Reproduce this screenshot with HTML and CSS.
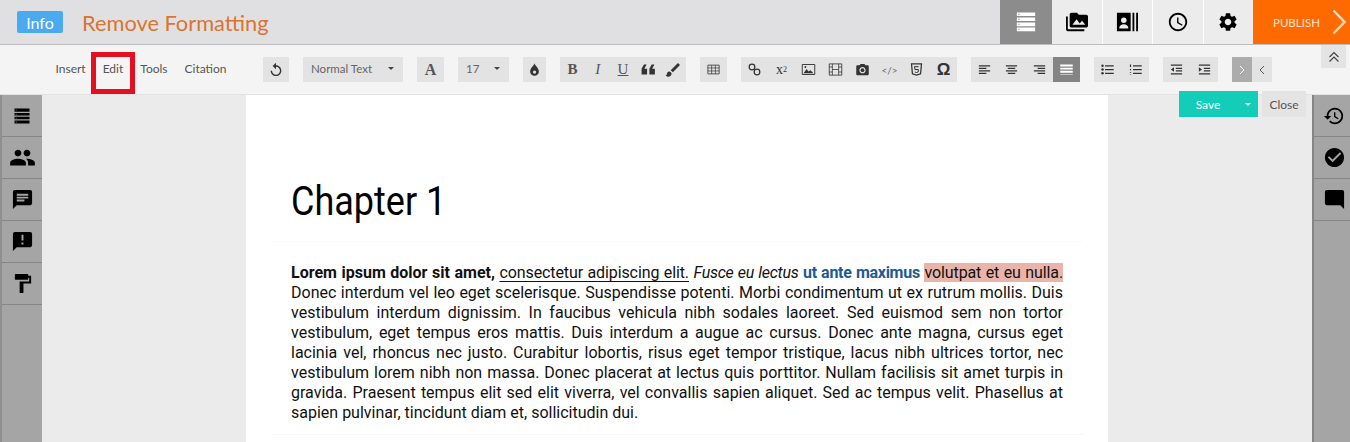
FILE: index.html
```html
<!DOCTYPE html>
<html lang="en">

<head>
    <meta charset="utf-8">
    <meta name="viewport" content="width=device-width, initial-scale=1.0">
    <title>Remove Formatting</title>
    <link rel="stylesheet" href="styles.css">
</head>

<body>
    <header class="topbar">
        <span class="badge">Info</span>
        <h1 class="title">Remove Formatting</h1>
        <nav class="mainnav">
            <a class="navtab active"><svg viewBox="0 0 24 24" class="navicon"><path d="M2 1.500h20v4H2zM2 7h20v4H2zM2 12.500h20v4H2zM2 18h20v4H2z" fill="#fff"/><path d="M3.500 3h1.500v1H3.500zM3.500 8.500h1.500v1H3.500zM3.500 14h1.500v1H3.500zM3.500 19.500h1.500v1H3.500z" fill="#8c8c8c"/></svg></a>
            <a class="navtab"><svg viewBox="0 0 24 24" class="navicon"><path d="M2 6H0v5h.01L0 20c0 1.100.9 2 2 2h18v-2H2V6zm20-2h-8l-2-2H6c-1.100 0-1.990.9-1.990 2L4 16c0 1.100.9 2 2 2h16c1.100 0 2-.9 2-2V6c0-1.100-.9-2-2-2zM7 15l4.500-6 3.500 4.510 2.500-3.010L21 15H7z"/></svg></a>
            <a class="navtab"><svg viewBox="0 0 24 24" class="navicon"><path d="M1 2h15v20H1zM18 2h2v20h-2zM22 2h2v20h-2z"/><circle cx="8.500" cy="10" r="3" fill="#ececec"/><path d="M3.500 19c0-3 2.500-4.500 5-4.500s5 1.500 5 4.500z" fill="#ececec"/></svg></a>
            <a class="navtab"><svg viewBox="0 0 24 24" class="navicon"><path d="M11.990 2C6.470 2 2 6.480 2 12s4.470 10 9.990 10C17.520 22 22 17.520 22 12S17.520 2 11.990 2zM12 20c-4.420 0-8-3.580-8-8s3.580-8 8-8 8 3.580 8 8-3.580 8-8 8zm.5-13H11v6l5.250 3.150.75-1.230-4.500-2.670z"/></svg></a>
            <a class="navtab"><svg viewBox="0 0 24 24" class="navicon"><path d="M19.140 12.940c.04-.3.06-.61.06-.94 0-.32-.02-.64-.07-.94l2.030-1.580c.18-.14.23-.41.12-.61l-1.920-3.320c-.12-.22-.37-.29-.59-.22l-2.390.96c-.5-.38-1.030-.7-1.620-.94l-.36-2.540c-.04-.24-.24-.41-.48-.41h-3.840c-.24 0-.43.17-.47.41l-.36 2.540c-.59.24-1.130.57-1.620.94l-2.390-.96c-.22-.08-.47 0-.59.22L2.740 8.870c-.12.21-.08.47.12.61l2.030 1.580c-.05.3-.09.63-.09.94s.02.64.07.94l-2.030 1.580c-.18.14-.23.41-.12.61l1.920 3.320c.12.22.37.29.59.22l2.390-.96c.5.38 1.030.7 1.620.94l.36 2.540c.05.24.24.41.48.41h3.840c.24 0 .44-.17.47-.41l.36-2.540c.59-.24 1.130-.56 1.620-.94l2.390.96c.22.08.47 0 .59-.22l1.920-3.320c.12-.22.07-.47-.12-.61l-2.010-1.580zM12 15.600c-1.980 0-3.600-1.620-3.600-3.600s1.620-3.600 3.600-3.600 3.600 1.620 3.600 3.600-1.620 3.600-3.600 3.600z"/></svg></a>
            <a class="publish">PUBLISH<svg viewBox="0 0 14 26" class="publish_arrow"><path d="M1.500 1.500 12.500 13 1.500 24.500" fill="none" stroke="#ffd9b8" stroke-width="2.400"/></svg></a>
        </nav>
    </header>

    <section class="toolbar">
        <div class="tabs">
            <a class="tab">Insert</a>
            <a class="tab marked">Edit</a>
            <a class="tab">Tools</a>
            <a class="tab">Citation</a>
        </div>
        <div class="groups">
            <div class="group w26"><button class="btn"><svg viewBox="0 0 24 24" class="ico i16"><path d="M12 5V1L7 6l5 5V7c3.310 0 6 2.690 6 6s-2.690 6-6 6-6-2.690-6-6H4c0 4.420 3.580 8 8 8s8-3.580 8-8-3.580-8-8-8z"/></svg></button></div>
            <div class="group w100"><button class="btn select"><span>Normal Text</span><i class="caret"></i></button></div>
            <div class="group w27"><button class="btn serif big bold">A</button></div>
            <div class="group w51"><button class="btn select"><span>17</span><i class="caret"></i></button></div>
            <div class="group w23"><button class="btn"><svg viewBox="0 0 24 24" class="ico"><path d="M12 2c1 4 7 8 7 13a7 7 0 0 1-14 0c0-5 6-9 7-13z"/><circle cx="12" cy="16" r="2.600" fill="#e3e3e3"/></svg></button></div>
            <div class="group w126">
                <button class="btn serif mid bold">B</button>
                <button class="btn serif mid em">I</button>
                <button class="btn serif mid un">U</button>
                <button class="btn"><svg viewBox="0 0 24 24" class="ico i22"><path d="M19 6h-3l-2.500 4.500V17h6v-6.500h-3zM10.500 6h-3L5 10.500V17h6v-6.500H8z"/></svg></button>
                <button class="btn"><svg viewBox="0 0 24 24" class="ico i18"><path d="M7 14c-1.660 0-3 1.340-3 3 0 1.310-1.160 2-2 2 .92 1.220 2.490 2 4 2 2.210 0 4-1.790 4-4 0-1.660-1.340-3-3-3zm13.710-9.370l-1.340-1.340c-.39-.39-1.020-.39-1.410 0L9 12.250 11.750 15l8.960-8.960c.39-.39.39-1.030 0-1.410z"/></svg></button>
            </div>
            <div class="group w27"><button class="btn"><svg viewBox="0 0 24 24" class="ico"><path d="M3 5h18v14H3z" fill="none" stroke="#333" stroke-width="1.300"/><path d="M3 9.500h18M3 14.300h18M9 5v14M15 5v14" stroke="#333" stroke-width="1.100"/></svg></button></div>
            <div class="group w216">
                <button class="btn"><svg viewBox="0 0 24 24" class="ico"><circle cx="8" cy="8" r="4.500" fill="none" stroke="#333" stroke-width="2"/><circle cx="16" cy="16" r="4.500" fill="none" stroke="#333" stroke-width="2"/></svg></button>
                <button class="btn sans">x<sup>2</sup></button>
                <button class="btn"><svg viewBox="0 0 24 24" class="ico"><path d="M2 4h20v16H2z" fill="none" stroke="#333" stroke-width="1.500"/><path d="M4 18l5-7 3 4 3-2 5 5z"/><circle cx="7" cy="8" r="1.500"/></svg></button>
                <button class="btn"><svg viewBox="0 0 24 24" class="ico"><path d="M2 3h20v18H2z" fill="none" stroke="#333" stroke-width="1.300"/><path d="M7 3v18M17 3v18M7 12h10M2 8h5M2 16h5M17 8h5M17 16h5" stroke="#333" stroke-width="1.200"/></svg></button>
                <button class="btn"><svg viewBox="0 0 24 24" class="ico"><path d="M9 3 7.200 5H4c-1.100 0-2 .9-2 2v12c0 1.100.9 2 2 2h16c1.100 0 2-.9 2-2V7c0-1.100-.9-2-2-2h-3.200L15 3H9zm3 15c-2.760 0-5-2.240-5-5s2.240-5 5-5 5 2.240 5 5-2.240 5-5 5z"/><circle cx="12" cy="13" r="3"/></svg></button>
                <button class="btn code">&lt;/&gt;</button>
                <button class="btn"><svg viewBox="0 0 24 24" class="ico"><path d="M4 3h16l-1.500 16L12 21l-6.500-2z" fill="none" stroke="#333" stroke-width="2"/><path d="M8.500 7.500h7M9 7.500l.4 4.500h5.600l-.4 4-2.600.8-2.600-.8" fill="none" stroke="#333" stroke-width="1.600"/></svg></button>
                <button class="btn omega">&#937;</button>
            </div>
            <div class="group w109">
                <button class="btn"><svg viewBox="0 0 24 24" class="ico"><path d="M3 5h18v2H3zM3 9h12v2H3zM3 13h18v2H3zM3 17h12v2H3z"/></svg></button>
                <button class="btn"><svg viewBox="0 0 24 24" class="ico"><path d="M3 5h18v2H3zM6 9h12v2H6zM3 13h18v2H3zM6 17h12v2H6z"/></svg></button>
                <button class="btn"><svg viewBox="0 0 24 24" class="ico"><path d="M3 5h18v2H3zM9 9h12v2H9zM3 13h18v2H3zM9 17h12v2H9z"/></svg></button>
                <button class="btn on"><svg viewBox="0 0 24 24" class="ico"><path d="M2 4h20v3H2zM2 9h20v3H2zM2 14h20v3H2zM2 19h20v1H2z" fill="#fff"/></svg></button>
            </div>
            <div class="group w55">
                <button class="btn"><svg viewBox="0 0 24 24" class="ico"><path d="M8 5h14v2H8zM8 11h14v2H8zM8 17h14v2H8z"/><circle cx="4" cy="6" r="2"/><circle cx="4" cy="12" r="2"/><circle cx="4" cy="18" r="2"/></svg></button>
                <button class="btn"><svg viewBox="0 0 24 24" class="ico"><path d="M8 5h14v2H8zM8 11h14v2H8zM8 17h14v2H8zM3 4h2v4H3zM3 11h2v2H3zM3 16h2v1H3zM3 19h2v1H3z"/></svg></button>
            </div>
            <div class="group w55">
                <button class="btn"><svg viewBox="0 0 24 24" class="ico"><path d="M3 4h18v2H3zM11 9h10v2H11zM11 13h10v2H11zM3 18h18v2H3zM8 8.500v7L3 12z"/></svg></button>
                <button class="btn"><svg viewBox="0 0 24 24" class="ico"><path d="M3 4h18v2H3zM11 9h10v2H11zM11 13h10v2H11zM3 18h18v2H3zM3 8.500v7L8 12z"/></svg></button>
            </div>
            <div class="group w40">
                <button class="btn arrow on_light"><svg viewBox="0 0 8 12" class="chev"><path d="M2 2l4 4-4 4" fill="none" stroke="#fff" stroke-width="1"/></svg></button>
                <button class="btn arrow"><svg viewBox="0 0 8 12" class="chev"><path d="M6 2 2 6l4 4" fill="none" stroke="#555" stroke-width="1"/></svg></button>
            </div>
        </div>
        <button class="collapse"><svg viewBox="0 0 12 12" class="collapse_ico"><path d="M1.500 6 6 1.500 10.500 6M1.500 10.500 6 6l4.500 4.500" fill="none" stroke="#444" stroke-width="1.200"/></svg></button>
    </section>

    <main class="workspace">
        <aside class="sidebar left">
            <a class="sideitem"><svg viewBox="0 0 24 24" class="sideicon s20"><path d="M3 3h18v4H3zM3 8.500h18v3H3zM3 13h18v3H3zM3 17.500h18v3.500H3z"/><path d="M4.500 4.500h1v1h-1zM4.500 9.500h1v1h-1zM4.500 14h1v1h-1zM4.500 18.700h1v1h-1z" fill="#a5a5a5"/></svg></a>
            <a class="sideitem"><svg viewBox="0 0 24 24" class="sideicon s27"><path d="M16 11c1.660 0 2.990-1.340 2.990-3S17.660 5 16 5c-1.660 0-3 1.340-3 3s1.340 3 3 3zm-8 0c1.660 0 2.990-1.340 2.990-3S9.660 5 8 5C6.340 5 5 6.340 5 8s1.340 3 3 3zm0 2c-2.330 0-7 1.170-7 3.500V19h14v-2.500c0-2.330-4.670-3.500-7-3.500zm8 0c-.29 0-.62.02-.97.05 1.160.84 1.970 1.970 1.970 3.450V19h6v-2.500c0-2.330-4.670-3.500-7-3.500z"/></svg></a>
            <a class="sideitem"><svg viewBox="0 0 24 24" class="sideicon"><path d="M20 2H4c-1.100 0-1.990.9-1.990 2L2 22l4-4h14c1.100 0 2-.9 2-2V4c0-1.100-.9-2-2-2zM6 9h12v2H6V9zm8 5H6v-2h8v2zm4-6H6V6h12v2z"/></svg></a>
            <a class="sideitem"><svg viewBox="0 0 24 24" class="sideicon"><path d="M20 2H4c-1.100 0-1.990.9-1.990 2L2 22l4-4h14c1.100 0 2-.9 2-2V4c0-1.100-.9-2-2-2zm-7 9h-2V5h2v6zm0 4h-2v-2h2v2z"/></svg></a>
            <a class="sideitem"><svg viewBox="0 0 24 24" class="sideicon"><path d="M18 4V3c0-.55-.45-1-1-1H5c-.55 0-1 .45-1 1v4c0 .55.45 1 1 1h12c.55 0 1-.45 1-1V6h1v4H9v11c0 .55.45 1 1 1h2c.55 0 1-.45 1-1v-9h8V4h-3z"/></svg></a>
        </aside>

        <div class="canvas">
            <article class="page">
                <h2 class="chapter">Chapter 1</h2>
                <div class="textblock">
                    <p><b>Lorem ipsum dolor sit amet,</b> <u>consectetur adipiscing elit.</u> <em>Fusce eu lectus</em> <b class="blue">ut ante maximus</b> <span class="mark">volutpat et eu nulla.</span> Donec interdum vel leo eget scelerisque. Suspendisse potenti. Morbi condimentum ut ex rutrum mollis. Duis vestibulum interdum dignissim. In faucibus vehicula nibh sodales laoreet. Sed euismod sem non tortor vestibulum, eget tempus eros mattis. Duis interdum a augue ac cursus. Donec ante magna, cursus eget lacinia vel, rhoncus nec justo. Curabitur lobortis, risus eget tempor tristique, lacus nibh ultrices tortor, nec vestibulum lorem nibh non massa. Donec placerat at lectus quis porttitor. Nullam facilisis sit amet turpis in gravida. Praesent tempus elit sed elit viverra, vel convallis sapien aliquet. Sed ac tempus velit. Phasellus at sapien pulvinar, tincidunt diam et, sollicitudin dui.</p>
                </div>
            </article>
        </div>

        <aside class="sidebar right">
            <a class="sideitem"><svg viewBox="0 0 24 24" class="sideicon s22"><path d="M13 3c-4.970 0-9 4.030-9 9H1l3.890 3.890.07.14L9 12H6c0-3.870 3.130-7 7-7s7 3.130 7 7-3.130 7-7 7c-1.930 0-3.680-.79-4.940-2.060l-1.420 1.420C8.270 19.990 10.510 21 13 21c4.970 0 9-4.030 9-9s-4.030-9-9-9zm-1 5v5l4.280 2.540.72-1.210-3.500-2.080V8H12z"/></svg></a>
            <a class="sideitem"><svg viewBox="0 0 24 24" class="sideicon"><path d="M12 2C6.480 2 2 6.480 2 12s4.480 10 10 10 10-4.480 10-10S17.520 2 12 2zm-2 15l-5-5 1.410-1.410L10 14.170l7.590-7.590L19 8l-9 9z"/></svg></a>
            <a class="sideitem"><svg viewBox="0 0 24 24" class="sideicon"><path d="M4 2h16c1.100 0 2 .9 2 2v18l-4-4H4c-1.100 0-2-.9-2-2V4c0-1.100.9-2 2-2z"/></svg></a>
        </aside>

        <div class="savebar">
            <button class="save">Save</button>
            <button class="save_more"><i class="caret white"></i></button>
            <button class="close">Close</button>
        </div>
    </main>
</body></html>
```

FILE: styles.css
```css
* {
    box-sizing: border-box;
}

html,
body {
    height: 100%;
}

body {
    margin: 0;
    overflow: hidden;
    display: flex;
    flex-direction: column;
    font-family: 'Lato', sans-serif;
    background-color: #ebebeb;
}

button {
    border: none;
    padding: 0;
    background: none;
    font-family: inherit;
}

/*Top bar*/
.topbar {
    height: 45px;
    flex: none;
    display: flex;
    align-items: center;
    background-color: #e0e0e2;
    border-bottom: 1px solid #bdbdbd;
    padding-left: 17px;
}

.badge {
    width: 46px;
    height: 22px;
    margin-right: 19px;
    background-color: #4aaaf0;
    border-radius: 2px;
    color: #fff;
    font-size: 16px;
    line-height: 24px;
    text-align: center;
}

.title {
    margin: 0;
    font-size: 21.800px;
    font-weight: 400;
    color: #d9752f;
}

.mainnav {
    display: flex;
    align-self: stretch;
    margin-left: auto;
}

.navtab {
    width: 50.500px;
    display: flex;
    align-items: center;
    justify-content: center;
    background-color: #ececec;
    border-right: 1px solid #fff;
}

.navtab.active {
    width: 52px;
    background-color: #8c8c8c;
    border-right: none;
}

.navicon {
    width: 22px;
    height: 22px;
}

.publish {
    width: 97px;
    margin-left: -1px;
    padding-left: 20px;
    display: flex;
    align-items: center;
    background-color: #ff6a00;
    color: #ffe3cc;
    font-size: 11.500px;
}

.publish_arrow {
    width: 14px;
    height: 26px;
    margin-left: 12px;
}

/*Toolbar*/
.toolbar {
    height: 50px;
    flex: none;
    position: relative;
    display: flex;
    align-items: center;
    padding-left: 47px;
    background-color: #f4f4f4;
    border-bottom: 1px solid #e2e2e2;
}

.tabs {
    display: flex;
    margin-right: 28px;
}

.tab {
    position: relative;
    padding: 0 8.500px 2px;
    font-size: 12px;
    color: #555;
}

.tab.marked::after {
    content: "";
    position: absolute;
    top: -9px;
    left: -3px;
    right: -3px;
    height: 32px;
    border: 5px solid #e3101f;
}

.groups {
    display: flex;
    gap: 14px;
}

.group {
    height: 25px;
    display: flex;
    background-color: #e3e3e3;
}

.w23 { width: 23px; }
.w26 { width: 26px; }
.w27 { width: 27px; }
.w40 { width: 40px; }
.w51 { width: 51px; }
.w55 { width: 55px; }
.w100 { width: 100px; }
.w109 { width: 109px; }
.w126 { width: 126px; }
.w216 { width: 216px; }

.btn {
    flex: 1;
    display: flex;
    align-items: center;
    justify-content: center;
    color: #333;
}

.btn.on {
    background-color: #848484;
}

.btn.on_light {
    background-color: #acacac;
}

.ico {
    width: 15px;
    height: 15px;
    fill: #333;
}

.i16 {
    width: 16px;
    height: 16px;
}

.i18 {
    width: 18px;
    height: 18px;
}

.i22 {
    width: 22px;
    height: 22px;
}

.chev {
    width: 8px;
    height: 12px;
}

.select {
    justify-content: space-between;
    padding: 0 9px 2px 8px;
    font-size: 11.500px;
    color: #666;
}

.caret {
    display: block;
    width: 0;
    height: 0;
    border-left: 3px solid transparent;
    border-right: 3px solid transparent;
    border-top: 3px solid #444;
}

.caret.white {
    border-top-color: #fff;
}

.serif {
    font-family: 'Liberation Serif', serif;
}

.big {
    font-size: 16px;
    color: #555;
}

.mid {
    font-size: 15px;
    color: #555;
}

.bold {
    font-weight: 700;
}

.em {
    font-style: italic;
}

.un {
    text-decoration: underline;
}

.sans {
    font-family: 'Liberation Serif', serif;
    font-size: 14px;
}

.sans sup {
    font-size: 8px;
    line-height: 0;
}

.code {
    font-size: 10px;
    color: #666;
}

.omega {
    font-family: 'Liberation Sans', sans-serif;
    font-size: 17px;
    font-weight: 700;
}

.collapse {
    position: absolute;
    top: 0;
    left: 1321px;
    width: 25px;
    height: 23px;
    background-color: #e4e4e4;
}

.collapse_ico {
    display: block;
    width: 12px;
    height: 12px;
    margin: auto;
}

/*Workspace*/
.workspace {
    flex: 1;
    position: relative;
    display: flex;
    min-height: 0;
}

.sidebar {
    flex: none;
    background-color: #a5a5a5;
}

.sidebar.left {
    width: 42px;
    border-left: 2px solid #8f8f8f;
}

.sidebar.right {
    width: 38px;
    padding-left: 4px;
    border-left: 2px solid #858585;
}

.sideitem {
    height: 42px;
    display: flex;
    align-items: center;
    justify-content: center;
    border-bottom: 1px solid #868686;
}

.sidebar.right .sideitem {
    margin-left: -4px;
    padding-left: 4px;
}

.sideicon {
    width: 23px;
    height: 23px;
}

.s20 {
    width: 20px;
    height: 20px;
}

.s22 {
    width: 22px;
    height: 22px;
}

.s27 {
    width: 27px;
    height: 27px;
}

.canvas {
    flex: 1;
    display: flex;
    justify-content: center;
}

.page {
    width: 862px;
    padding: 0 45px;
    background-color: #fff;
}

.chapter {
    margin: 0;
    padding-top: 82px;
    font-family: 'Roboto', sans-serif;
    font-size: 40px;
    font-weight: 400;
    line-height: 50px;
    color: #000;
    transform: scaleX(.9);
    transform-origin: left;
}

.textblock {
    margin: 14px -20px 0;
    padding: 21px 20px 11px;
    border-top: 1px solid #fbfbfb;
    border-bottom: 1px solid #f4f4f4;
}

.textblock p {
    margin: 0;
    font-family: 'Roboto', sans-serif;
    font-size: 16px;
    line-height: 20px;
    text-align: justify;
    color: #111;
}

/*Foerste linje staar taettere i forlaegget*/
.textblock u {
    letter-spacing: -.1px;
    text-underline-offset: 3px;
}

.textblock em {
    letter-spacing: -.27px;
}

.blue {
    letter-spacing: -.27px;
    color: #1d5a94;
}

.mark {
    letter-spacing: -.1px;
    background-color: #e9b5ab;
}

/*Save og close*/
.savebar {
    position: absolute;
    top: -4px;
    right: 44px;
    height: 26px;
    display: flex;
}

.save {
    width: 58px;
    background-color: #14cdb9;
    color: #fff;
    font-size: 12px;
}

.save_more {
    width: 21px;
    display: flex;
    align-items: center;
    justify-content: center;
    background-color: #14cdb9;
}

.close {
    width: 44px;
    margin-left: 4px;
    background-color: #e4e4e4;
    color: #555;
    font-size: 12px;
}
```
